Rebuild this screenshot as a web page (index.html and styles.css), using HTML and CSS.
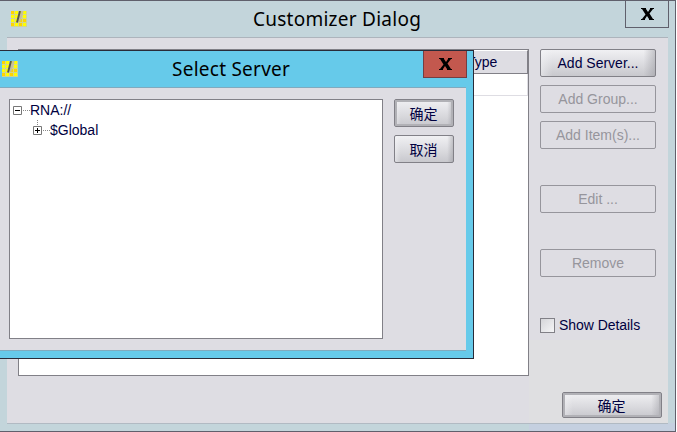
FILE: index.html
```html
<!DOCTYPE html>
<html lang="zh-CN">
<head>
<meta charset="utf-8">
<title>Customizer Dialog</title>
<link rel="stylesheet" href="styles.css">
</head>
<body>
<svg class="defs" width="0" height="0" aria-hidden="true">
  <symbol id="app" viewBox="0 0 16 16">
    <rect x="0" y="0" width="16" height="16" fill="#d3d68e"/>
    <path fill="#ffff00" d="M4 0h3v3h-3zM8 0h3v3h-3zM12 0h3v3h-3zM0 4h3v3h-3zM4 4h3v3h-3zM12 4h3v3h-3zM4 8h3v3h-3zM0 8h3v3h-3zM4 12h3v3h-3zM12 12h3v3h-3z"/>
    <path fill="#ffd500" d="M0 0h3v3h-3zM8 8h3v3h-3zM12 8h3v3h-3zM0 12h3v3h-3zM8 12h3v3h-3z"/>
    <path d="M11.500 0L8 10.500" stroke="#c5bfa0" stroke-width="2.500"/>
    <path d="M9 0L6 11.500" stroke="#57584c" stroke-width="1.900"/>
  </symbol>
  <symbol id="close" viewBox="0 0 13 12">
    <path d="M0 0h5v1l2 3 2-3V0h4v1h-1L8.500 5.500 12 11h1v1H8v-1L6 8l-2 3v1H0v-1h1l3.500-4.500L1 1H0z"/>
  </symbol>
</svg>
<main class="window">
  <header class="titlebar">
    <svg class="appicon"><use href="#app"/></svg>
    <h1 class="title">Customizer Dialog</h1>
    <div class="close"><svg><use href="#close"/></svg></div>
  </header>
  <div class="content">
    <section class="table">
      <div class="thead">Type</div>
      <div class="row"></div>
    </section>
    <aside class="actions">
      <div class="stack">
        <button class="btn">Add Server...</button>
        <button class="btn off">Add Group...</button>
        <button class="btn off">Add Item(s)...</button>
        <button class="btn off edit">Edit ...</button>
        <button class="btn off remove">Remove</button>
        <label class="check"><span class="box"></span>Show Details</label>
      </div>
      <div class="footer"><button class="btn primary cjk">确定</button></div>
    </aside>
  </div>
</main>
<section class="dialog">
  <header class="titlebar">
    <svg class="appicon"><use href="#app"/></svg>
    <h2 class="title">Select Server</h2>
    <div class="close"><svg><use href="#close"/></svg></div>
  </header>
  <div class="dialog-body">
    <div class="tree">
      <div class="node"><svg width="17" height="20"><path class="handle" d="M.5 6.500h8v8h-8z"/><path class="sign" d="M2 10.500h5"/><path class="dots" d="M10 10.500h7"/></svg>RNA://</div>
      <div class="node child"><svg width="17" height="20"><path class="dots" d="M4.500 0v5"/><path class="handle" d="M.5 6.500h8v8h-8z"/><path class="sign" d="M2 10.500h5M4.500 8v5"/><path class="dots" d="M10 10.500h7"/></svg>$Global</div>
    </div>
    <div class="choices">
      <button class="btn primary cjk">确定</button>
      <button class="btn cjk">取消</button>
    </div>
  </div>
</section>
</body>
</html>
```
FILE: styles.css
```css
* { box-sizing: border-box; }
body {
  margin: 0;
  width: 677px;
  height: 432px;
  overflow: hidden;
  background: #fff;
  color: #000040;
  font: 14px/20px "Liberation Sans", "Noto Sans CJK SC", sans-serif;
}
.defs { display: block; }
.window {
  width: 676px;
  height: 432px;
  display: flex;
  flex-direction: column;
  border: 1px solid #60606c;
  border-left: 0;
  background: linear-gradient(#c5d0e0, #c5d0e0) 529px 422px / 146px 8px no-repeat #c3d5db;
}
.titlebar { display: flex; flex: none; color: #000; }
.appicon { width: 16px; height: 16px; flex: none; }
.window > .titlebar { height: 36px; padding: 0 6px 0 11px; }
.window .appicon { margin-top: 10px; }
.title {
  flex: 1;
  margin: 0;
  font: 400 19px/36px "Noto Sans", sans-serif;
  letter-spacing: .25px;
  white-space: nowrap;
  text-align: left;
}
.window .title { padding-left: 226px; }
.close {
  width: 44px;
  height: 27px;
  flex: none;
  display: flex;
  justify-content: center;
  padding-top: 7px;
  border: 1px solid #60606c;
  border-top: 0;
}
.close svg { width: 13px; height: 12px; }
.content {
  display: flex;
  width: 661px;
  height: 387px;
  margin-left: 7px;
  padding: 11px 0 0 11px;
  border-top: 1px solid #adb4bc;
  border-bottom: 1px solid #b1bac3;
  background: #dedde3;
}
.table {
  width: 511px;
  height: 327px;
  border: 1px solid #818087;
  background: #fff;
}
.thead {
  height: 24px;
  padding: 1px 0 0 448px;
  border-top: 1px solid #fff;
  border-right: 1px solid #818087;
  border-bottom: 1px solid #818087;
  background: #dedde3;
}
.row {
  height: 22px;
  border-right: 1px solid #dedde3;
  border-bottom: 1px solid #dedde3;
}
.actions { width: 139px; height: 374px; display: flex; flex-direction: column; }
.stack { height: 291px; padding-left: 11px; display: flex; flex-direction: column; gap: 8px; }
.footer { flex: 1; padding: 52px 0 0 33px; background: #dfdfe1; }
.btn {
  display: block;
  flex: none;
  width: 116px;
  height: 28px;
  padding: 0;
  border: 1px solid #818087;
  border-radius: 2px;
  background: linear-gradient(90deg, rgba(245,245,248,.5), transparent 10%, transparent 90%, rgba(145,145,152,.45)), linear-gradient(#f0f0f3, #dddde1 50%, #c8c8cd);
  color: #000040;
  font: 14px/26px "Liberation Sans", sans-serif;
  text-align: center;
}
.btn.off { background: transparent; border-color: #96959c; color: #96959c; }
.btn.cjk { padding-right: 1px; font-family: "Noto Sans CJK SC", sans-serif; }
.btn.primary { box-shadow: inset 0 0 0 2px #b1b1b6; }
.edit { margin-top: 28px; }
.remove { margin-top: 28px; }
.footer .btn { width: 100px; height: 26px; line-height: 22px; }
.check { display: flex; align-items: center; margin-top: 30px; height: 20px; gap: 4px; letter-spacing: -.05px; }
.box { width: 15px; height: 15px; border: 1px solid #818087; background: linear-gradient(135deg, #d5d5d9, #f5f5f7); }
.dialog {
  position: absolute;
  left: 0;
  top: 50px;
  width: 474px;
  height: 309px;
  border: 1px solid #292b38;
  border-left: 0;
  background: #66caea;
}
.dialog > .titlebar { height: 36px; padding: 0 6px 0 2px; }
.dialog .appicon { margin-top: 10px; }
.dialog .title { padding-left: 154px; }
.dialog .close { background: #c3584e; border-color: #753e42; }
.dialog-body {
  display: flex;
  gap: 11px;
  width: 466px;
  height: 264px;
  padding: 11px 0 0 9px;
  border-top: 1px solid #80aabe;
  border-bottom: 1px solid #80aabe;
  background: #dedde3;
}
.tree { width: 374px; height: 240px; padding-left: 3px; border: 1px solid #818087; background: #fff; }
.node { display: flex; height: 20px; line-height: 20px; }
.node.child { padding-left: 20px; }
.node svg { flex: none; }
.handle { fill: #fff; stroke: #777; }
.sign { fill: none; stroke: #000; }
.dots { fill: none; stroke: #888; stroke-dasharray: 1 1; }
.choices { display: flex; flex-direction: column; gap: 8px; }
.choices .btn { width: 60px; line-height: 24px; }
```
